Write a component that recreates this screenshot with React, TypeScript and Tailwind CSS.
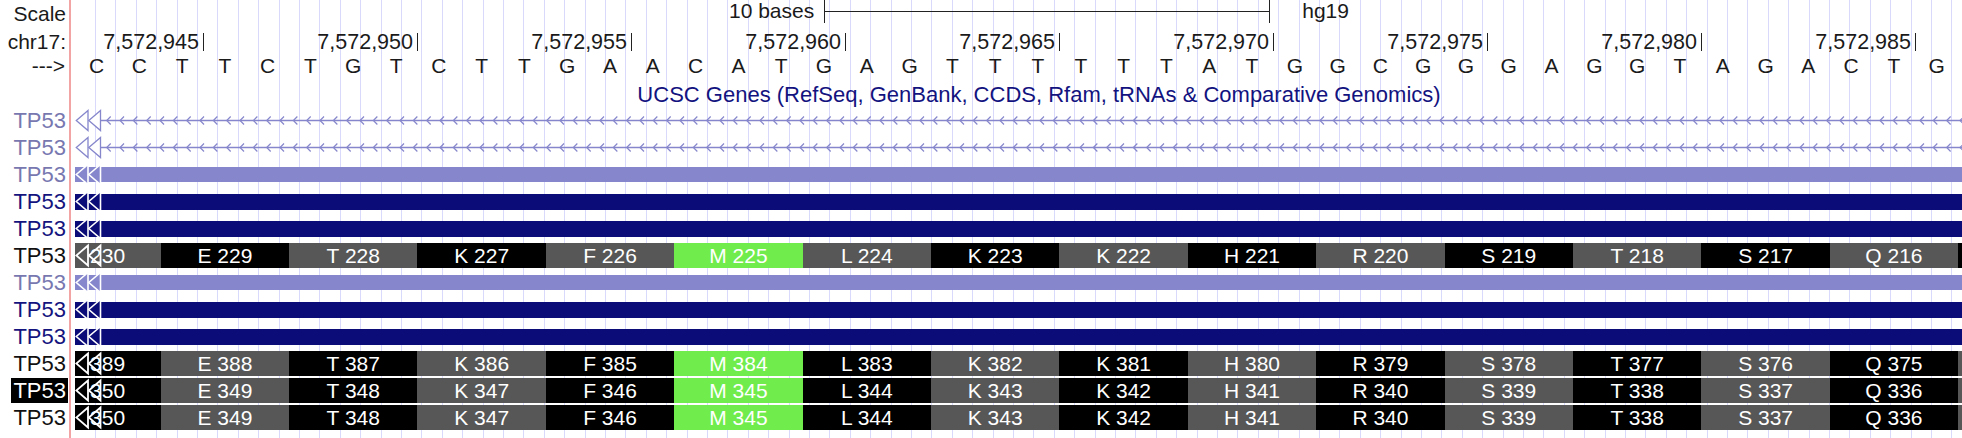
import React from "react";

const LIGHT = "#8686cc";
const DARK = "#0c0c78";
const DATA_W = 1887;

const bases = "CCTTCTGTCTTGAACATGAGTTTTTTATGGCGGGAGGTAGACTG".split("");
const tickLabels = [
  "7,572,945",
  "7,572,950",
  "7,572,955",
  "7,572,960",
  "7,572,965",
  "7,572,970",
  "7,572,975",
  "7,572,980",
  "7,572,985",
];

type C = "k" | "g" | "m";
const bgMap: Record<C, string> = {
  k: "bg-black",
  g: "bg-[#575757]",
  m: "bg-[#70ec4c]",
};

type CodonRowData = { partial: string; partialColor: C; first: C; labels: string[]; sliver: C };

const rowA: CodonRowData = {
  partial: "230",
  partialColor: "g",
  first: "k",
  labels: ["E 229", "T 228", "K 227", "F 226", "M 225", "L 224", "K 223", "K 222", "H 221", "R 220", "S 219", "T 218", "S 217", "Q 216"],
  sliver: "k",
};
const rowB: CodonRowData = {
  partial: "389",
  partialColor: "k",
  first: "g",
  labels: ["E 388", "T 387", "K 386", "F 385", "M 384", "L 383", "K 382", "K 381", "H 380", "R 379", "S 378", "T 377", "S 376", "Q 375"],
  sliver: "g",
};
const rowC: CodonRowData = {
  partial: "350",
  partialColor: "k",
  first: "g",
  labels: ["E 349", "T 348", "K 347", "F 346", "M 345", "L 344", "K 343", "K 342", "H 341", "R 340", "S 339", "T 338", "S 337", "Q 336"],
  sliver: "g",
};

function triPts(ox: number) {
  return `${ox + 12.5},3.5 ${ox + 0.8},13.5 ${ox + 12.5},23.5`;
}

function BigChevrons({ stroke, fill, sw }: { stroke: string; fill: string; sw: number }) {
  return (
    <svg width="28" height="27" viewBox="0 0 28 27" className="absolute left-[4px] top-0">
      <polygon points={triPts(0.5)} fill={fill} stroke={stroke} strokeWidth={sw} />
      <polygon points={triPts(13)} fill={fill} stroke={stroke} strokeWidth={sw} />
    </svg>
  );
}

function LineRow() {
  const chevs: number[] = [];
  for (let x = 31.7; x < DATA_W; x += 13.333) chevs.push(x);
  return (
    <div className="relative h-[27px]">
      <svg width={DATA_W} height={27} className="block ml-[4px]">
        <line x1={26} y1={13.5} x2={DATA_W} y2={13.5} stroke={LIGHT} strokeWidth={1.3} />
        {chevs.map((x) => (
          <polyline
            key={x}
            points={`${x + 4},9.5 ${x},13.5 ${x + 4},17.5`}
            fill="none"
            stroke={LIGHT}
            strokeWidth={1.2}
          />
        ))}
      </svg>
      <BigChevrons stroke={LIGHT} fill="white" sw={1.3} />
    </div>
  );
}

function BarRow({ dark }: { dark: boolean }) {
  return (
    <div className="relative h-[27px] flex items-center pl-[4px]">
      <div className={dark ? "h-[16px] flex-1 bg-[#0c0c78]" : "h-[15px] flex-1 bg-[#8686cc]"} />
      <BigChevrons stroke="white" fill={dark ? DARK : LIGHT} sw={1.6} />
    </div>
  );
}

function CodonRow({ d }: { d: CodonRowData }) {
  const other: C = d.first === "k" ? "g" : "k";
  return (
    <div className="relative h-[27px] flex items-center pl-[4.1px] text-white">
      <div className={`${bgMap[d.partialColor]} w-[85.6px] h-[25px] shrink-0 flex`}>
        <span className="ml-[15px] leading-[25px] whitespace-nowrap">{d.partial}</span>
      </div>
      {d.labels.map((l, i) => {
        const c: C = l.startsWith("M ") ? "m" : i % 2 === 0 ? d.first : other;
        return (
          <div
            key={l}
            className={`${bgMap[c]} w-[128.4px] h-[25px] shrink-0 text-center leading-[25px] whitespace-nowrap`}
          >
            {l}
          </div>
        );
      })}
      <div className={`${bgMap[d.sliver]} flex-1 h-[25px]`} />
      <BigChevrons stroke="white" fill="none" sw={1.8} />
    </div>
  );
}

type LabelKind = "light" | "dark" | "black" | "hl";
const labelKinds: LabelKind[] = ["light", "light", "light", "dark", "dark", "black", "light", "dark", "dark", "black", "hl", "black"];
const labelClass: Record<LabelKind, string> = {
  light: "text-[#7878b0]",
  dark: "text-[#14147e]",
  black: "text-[#111111]",
  hl: "text-white",
};

export default function App() {
  return (
    <div className="w-[1962px] h-[438px] overflow-hidden bg-white flex font-['Liberation_Sans',Arial,sans-serif] text-[21px] text-[#1a1a1a]">
      {/* label column */}
      <div className="w-[69px] shrink-0 flex flex-col items-end pr-[3px]">
        <div className="h-[28px] leading-[28px]">Scale</div>
        <div className="h-[28px] leading-[28px]">chr17:</div>
        <div className="h-[19px] leading-[19px] pr-[1px]">---&gt;</div>
        <div className="h-[32px]" />
        {labelKinds.map((k, i) =>
          k === "hl" ? (
            <div key={i} className="h-[27px] flex items-center mr-[-2px] text-[22px]">
              <span className="bg-black text-white h-[25px] leading-[25px] px-[2px]">TP53</span>
            </div>
          ) : (
            <div key={i} className={`h-[27px] leading-[27px] text-[22px] ${labelClass[k]}`}>
              TP53
            </div>
          )
        )}
      </div>

      {/* red divider */}
      <div className="w-[2px] shrink-0 bg-[#f2a4a4]" />

      {/* data area */}
      <div className="flex-1 flex flex-col bg-[repeating-linear-gradient(to_right,#d9d9fc_0px,#d9d9fc_1px,transparent_1px,transparent_20.4px)] bg-no-repeat bg-position-[24px_0px] bg-size-[calc(100%_-_24px)_100%]">
        {/* scale bar row */}
        <div className="h-[28px] flex items-start">
          <span className="ml-[658px] leading-[22px] whitespace-nowrap">10 bases</span>
          <div className="ml-[10px] w-[446px] h-[23px] border-x-[1.5px] border-[#222222] flex flex-col">
            <div className="mt-[10.5px] h-[1.5px] bg-[#222222]" />
          </div>
          <span className="ml-[32px] leading-[22px]">hg19</span>
        </div>

        {/* position ticks */}
        <div className="h-[28px] flex text-[21.5px]">
          {tickLabels.map((t, i) => (
            <div
              key={t}
              className={`${i === 0 ? "w-[133.25px]" : "w-[214px]"} shrink-0 flex justify-end items-start`}
            >
              <span className="leading-[28px] whitespace-nowrap">{t}</span>
              <div className="ml-[3.75px] mt-[5px] w-[1.5px] h-[18px] bg-[#222222]" />
            </div>
          ))}
        </div>

        {/* bases */}
        <div className="h-[19px] flex pl-[4.1px]">
          {bases.map((b, i) => (
            <div key={i} className="w-[42.8px] shrink-0 text-center leading-[19px]">
              {b}
            </div>
          ))}
        </div>

        {/* track title */}
        <div className="h-[32px] pt-[8px] leading-[24px] pl-[45px] text-center whitespace-nowrap text-[22px] text-[#13137f]">
          UCSC Genes (RefSeq, GenBank, CCDS, Rfam, tRNAs &amp; Comparative Genomics)
        </div>

        <LineRow />
        <LineRow />
        <BarRow dark={false} />
        <BarRow dark />
        <BarRow dark />
        <CodonRow d={rowA} />
        <BarRow dark={false} />
        <BarRow dark />
        <BarRow dark />
        <CodonRow d={rowB} />
        <CodonRow d={rowC} />
        <CodonRow d={rowC} />
      </div>
    </div>
  );
}
